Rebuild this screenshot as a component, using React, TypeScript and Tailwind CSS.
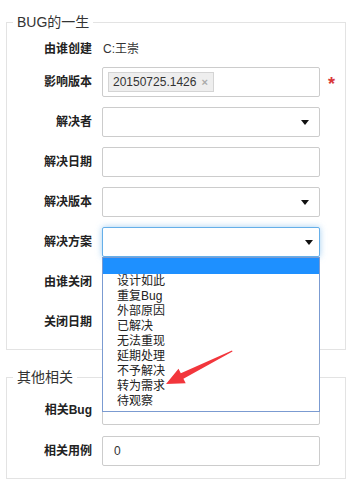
import React from 'react'

const font = { fontFamily: '"Liberation Sans", "Noto Sans CJK SC", sans-serif' }

const options = ['设计如此', '重复Bug', '外部原因', '已解决', '无法重现', '延期处理', '不予解决', '转为需求', '待观察']

function Caret({ className }: { className?: string }) {
  return (
    <svg width="8" height="5" viewBox="0 0 8 5" className={className}>
      <path d="M0 0 H8 L4 5 Z" fill="#111" />
    </svg>
  )
}

function Row({ label, children, className = '' }: { label: string; children?: React.ReactNode; className?: string }) {
  return (
    <div className={`flex items-center h-[30px] ${className}`}>
      <div className="w-[85px] shrink-0 text-right text-[12px] font-bold text-[#222]">{label}</div>
      <div className="ml-[10px] flex items-center">{children}</div>
    </div>
  )
}

function Box({ children, className = '' }: { children?: React.ReactNode; className?: string }) {
  return (
    <div className={`relative w-[218px] h-[30px] border border-[#ccc] rounded-[2px] bg-white flex items-center ${className}`}>
      {children}
    </div>
  )
}

export default function App() {
  return (
    <div style={font} className="w-[356px] h-[480px] overflow-hidden bg-white pl-[6px] relative">
      <fieldset className="mt-[12px] w-[340px] border border-[#e3e3e3] pb-[12px]">
        <legend className="ml-[6px] px-[4px] text-[14px] leading-[20px] text-[#333]">BUG的一生</legend>
        <div className="flex flex-col">
          <Row label="由谁创建" className="mt-[2px]">
            <span className="pl-[1px] text-[12px] text-[#333]">C:王崇</span>
          </Row>
          <Row label="影响版本" className="mt-[3px]">
            <Box>
              <div className="ml-[5px] h-[20px] flex items-center border border-[#d4d4d4] bg-[#eeeeee] pl-[4px] pr-[5px] text-[12px] text-[#333]">
                20150725.1426
                <span className="ml-[5px] text-[11px] font-bold text-[#aaa]">×</span>
              </div>
            </Box>
            <span className="ml-[8px] mt-[4px] text-[18px] font-bold text-[#d9383a] leading-none">*</span>
          </Row>
          <Row label="解决者" className="mt-[10px]">
            <Box><Caret className="absolute right-[10px] top-[12px]" /></Box>
          </Row>
          <Row label="解决日期" className="mt-[10px]">
            <Box />
          </Row>
          <Row label="解决版本" className="mt-[10px]">
            <Box><Caret className="absolute right-[10px] top-[12px]" /></Box>
          </Row>
          <Row label="解决方案" className="mt-[10px] relative z-10">
            <div className="relative">
              <div className="relative w-[218px] h-[30px] border border-[#66afe9] rounded-[2px] bg-white shadow-[0_0_6px_rgba(102,175,233,0.6)]">
                <Caret className="absolute right-[6px] top-[12px]" />
              </div>
              <div className="absolute left-0 top-[30px] w-[218px] border border-[#7b9bd1] bg-white pb-[2px]">
                <div className="h-[16px] bg-[#1e90ff]" />
                {options.map(o => (
                  <div key={o} className="h-[15px] leading-[15px] pl-[14px] text-[12px] text-[#222]">{o}</div>
                ))}
              </div>
            </div>
          </Row>
          <Row label="由谁关闭" className="mt-[10px]" />
          <Row label="关闭日期" className="mt-[10px]" />
        </div>
      </fieldset>

      <fieldset className="mt-[17px] w-[340px] border border-[#e3e3e3] pb-[12px]">
        <legend className="ml-[6px] px-[4px] text-[14px] leading-[20px] text-[#333]">其他相关</legend>
        <div className="flex flex-col">
          <Row label="相关Bug" className="mt-[8px]">
            <Box />
          </Row>
          <Row label="相关用例" className="mt-[11px]">
            <Box>
              <span className="pl-[11px] text-[12px] text-[#333]">0</span>
            </Box>
          </Row>
        </div>
      </fieldset>

      <svg className="absolute left-0 top-0 pointer-events-none z-20" width="356" height="480">
        <polygon points="232,350.5 180.8,373.3 178.5,368.8 166,384 185.7,383.2 183.4,378.7 232.5,351.5" fill="#f2363c" />
      </svg>
    </div>
  )
}
